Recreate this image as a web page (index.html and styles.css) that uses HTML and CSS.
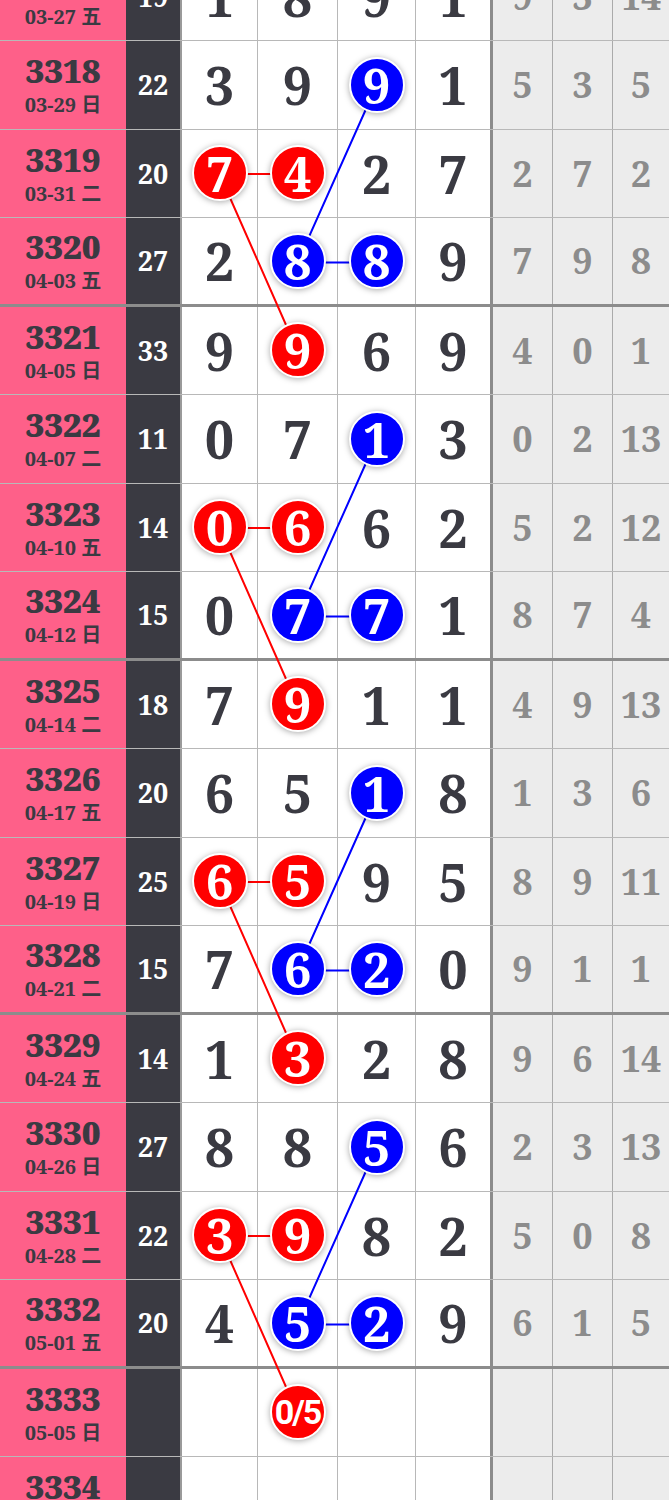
FILE: index.html
```html
<!DOCTYPE html>
<html lang="zh">
<head>
    <meta charset="UTF-8">
    <meta name="viewport" content="width=device-width, initial-scale=1.0">
    <title>走势图</title>
    <link rel="stylesheet" href="styles.css">
</head>
<body>

<div class="chart">
    <div class="row">
        <div class="issue"><b>3317</b><span>03-27 五</span></div>
        <div class="sum">19</div>
        <div class="cell">1</div><div class="cell">8</div><div class="cell">9</div><div class="cell last">1</div>
        <div class="miss">9</div><div class="miss">3</div><div class="miss">14</div>
    </div>
    <div class="row">
        <div class="issue"><b>3318</b><span>03-29 日</span></div>
        <div class="sum">22</div>
        <div class="cell">3</div><div class="cell">9</div><div class="cell"><i class="ball blue">9</i></div><div class="cell last">1</div>
        <div class="miss">5</div><div class="miss">3</div><div class="miss">5</div>
    </div>
    <div class="row">
        <div class="issue"><b>3319</b><span>03-31 二</span></div>
        <div class="sum">20</div>
        <div class="cell"><i class="ball red">7</i></div><div class="cell"><i class="ball red">4</i></div><div class="cell">2</div><div class="cell last">7</div>
        <div class="miss">2</div><div class="miss">7</div><div class="miss">2</div>
    </div>
    <div class="row sep">
        <div class="issue"><b>3320</b><span>04-03 五</span></div>
        <div class="sum">27</div>
        <div class="cell">2</div><div class="cell"><i class="ball blue">8</i></div><div class="cell"><i class="ball blue">8</i></div><div class="cell last">9</div>
        <div class="miss">7</div><div class="miss">9</div><div class="miss">8</div>
    </div>
    <div class="row">
        <div class="issue"><b>3321</b><span>04-05 日</span></div>
        <div class="sum">33</div>
        <div class="cell">9</div><div class="cell"><i class="ball red">9</i></div><div class="cell">6</div><div class="cell last">9</div>
        <div class="miss">4</div><div class="miss">0</div><div class="miss">1</div>
    </div>
    <div class="row">
        <div class="issue"><b>3322</b><span>04-07 二</span></div>
        <div class="sum">11</div>
        <div class="cell">0</div><div class="cell">7</div><div class="cell"><i class="ball blue">1</i></div><div class="cell last">3</div>
        <div class="miss">0</div><div class="miss">2</div><div class="miss">13</div>
    </div>
    <div class="row">
        <div class="issue"><b>3323</b><span>04-10 五</span></div>
        <div class="sum">14</div>
        <div class="cell"><i class="ball red">0</i></div><div class="cell"><i class="ball red">6</i></div><div class="cell">6</div><div class="cell last">2</div>
        <div class="miss">5</div><div class="miss">2</div><div class="miss">12</div>
    </div>
    <div class="row sep">
        <div class="issue"><b>3324</b><span>04-12 日</span></div>
        <div class="sum">15</div>
        <div class="cell">0</div><div class="cell"><i class="ball blue">7</i></div><div class="cell"><i class="ball blue">7</i></div><div class="cell last">1</div>
        <div class="miss">8</div><div class="miss">7</div><div class="miss">4</div>
    </div>
    <div class="row">
        <div class="issue"><b>3325</b><span>04-14 二</span></div>
        <div class="sum">18</div>
        <div class="cell">7</div><div class="cell"><i class="ball red">9</i></div><div class="cell">1</div><div class="cell last">1</div>
        <div class="miss">4</div><div class="miss">9</div><div class="miss">13</div>
    </div>
    <div class="row">
        <div class="issue"><b>3326</b><span>04-17 五</span></div>
        <div class="sum">20</div>
        <div class="cell">6</div><div class="cell">5</div><div class="cell"><i class="ball blue">1</i></div><div class="cell last">8</div>
        <div class="miss">1</div><div class="miss">3</div><div class="miss">6</div>
    </div>
    <div class="row">
        <div class="issue"><b>3327</b><span>04-19 日</span></div>
        <div class="sum">25</div>
        <div class="cell"><i class="ball red">6</i></div><div class="cell"><i class="ball red">5</i></div><div class="cell">9</div><div class="cell last">5</div>
        <div class="miss">8</div><div class="miss">9</div><div class="miss">11</div>
    </div>
    <div class="row sep">
        <div class="issue"><b>3328</b><span>04-21 二</span></div>
        <div class="sum">15</div>
        <div class="cell">7</div><div class="cell"><i class="ball blue">6</i></div><div class="cell"><i class="ball blue">2</i></div><div class="cell last">0</div>
        <div class="miss">9</div><div class="miss">1</div><div class="miss">1</div>
    </div>
    <div class="row">
        <div class="issue"><b>3329</b><span>04-24 五</span></div>
        <div class="sum">14</div>
        <div class="cell">1</div><div class="cell"><i class="ball red">3</i></div><div class="cell">2</div><div class="cell last">8</div>
        <div class="miss">9</div><div class="miss">6</div><div class="miss">14</div>
    </div>
    <div class="row">
        <div class="issue"><b>3330</b><span>04-26 日</span></div>
        <div class="sum">27</div>
        <div class="cell">8</div><div class="cell">8</div><div class="cell"><i class="ball blue">5</i></div><div class="cell last">6</div>
        <div class="miss">2</div><div class="miss">3</div><div class="miss">13</div>
    </div>
    <div class="row">
        <div class="issue"><b>3331</b><span>04-28 二</span></div>
        <div class="sum">22</div>
        <div class="cell"><i class="ball red">3</i></div><div class="cell"><i class="ball red">9</i></div><div class="cell">8</div><div class="cell last">2</div>
        <div class="miss">5</div><div class="miss">0</div><div class="miss">8</div>
    </div>
    <div class="row sep">
        <div class="issue"><b>3332</b><span>05-01 五</span></div>
        <div class="sum">20</div>
        <div class="cell">4</div><div class="cell"><i class="ball blue">5</i></div><div class="cell"><i class="ball blue">2</i></div><div class="cell last">9</div>
        <div class="miss">6</div><div class="miss">1</div><div class="miss">5</div>
    </div>
    <div class="row">
        <div class="issue"><b>3333</b><span>05-05 日</span></div>
        <div class="sum"></div>
        <div class="cell"></div><div class="cell"><i class="ball red small">0/5</i></div><div class="cell"></div><div class="cell last"></div>
        <div class="miss"></div><div class="miss"></div><div class="miss"></div>
    </div>
    <div class="row">
        <div class="issue"><b>3334</b><span>05-08 二</span></div>
        <div class="sum"></div>
        <div class="cell"></div><div class="cell"></div><div class="cell"></div><div class="cell last"></div>
        <div class="miss"></div><div class="miss"></div><div class="miss"></div>
    </div>

    <!-- 连线 -->
    <svg class="links" width="669" height="1593" viewBox="0 0 669 1593">
        <g stroke="#f00" stroke-width="2" fill="none">
            <polyline points="297.5,221 219.5,221 297.5,398"/>
            <polyline points="297.5,575 219.5,575 297.5,752"/>
            <polyline points="297.5,929 219.5,929 297.5,1106"/>
            <polyline points="297.5,1283 219.5,1283 297.5,1460"/>
        </g>
        <g stroke="#00f" stroke-width="2" fill="none">
            <polyline points="376.5,132.5 297.5,309.5 376.5,309.5"/>
            <polyline points="376.5,486.5 297.5,663.5 376.5,663.5"/>
            <polyline points="376.5,840.5 297.5,1017.5 376.5,1017.5"/>
            <polyline points="376.5,1194.5 297.5,1371.5 376.5,1371.5"/>
        </g>
    </svg>
</div>

</body>
</html>
```

FILE: styles.css
```css
body {
    margin: 0;
    background-color: #fff;
    font-family: "Noto Serif", "DejaVu Serif", "Noto Sans CJK SC", serif;
    overflow: hidden;
}
.chart {
    position: relative;
    width: 669px;
    margin-top: -47.5px;
}
.row {
    display: grid;
    grid-template-columns: 126px 56px 76px 80px 78px 77px 60px 60px 1fr;
    height: 88.5px;
    box-sizing: border-box;
    border-bottom: 1px solid rgba(0, 0, 0, 0.28);
}
.row.sep {
    border-bottom: 3px solid rgba(0, 0, 0, 0.45); /* 每4期一条粗线 */
}
.row > div {
    display: flex;
    align-items: center;
    justify-content: center;
    font-weight: bold;
}
.issue {
    flex-direction: column;
    background-color: #fe6089;
    color: #3a3a42;
}
.issue b {
    font-size: 33px;
    line-height: 36px;
}
.issue span {
    font-size: 20px;
    line-height: 22px;
    margin-top: 5px;
}
.sum {
    background-color: #3a3a42;
    color: #fff;
    font-size: 27px;
    border-right: 2px solid #9a9a9a;
}
.cell {
    color: #3a3a42;
    font-size: 52px;
    border-right: 1px solid rgba(0, 0, 0, 0.28);
}
.cell.last {
    border-right: 3px solid rgba(0, 0, 0, 0.45);
}
.miss {
    background-color: #ececec;
    color: #8c8c8c;
    font-size: 36px;
    border-right: 1px solid rgba(0, 0, 0, 0.28);
}
.miss:last-child {
    border-right: none;
}
.ball {
    position: relative;
    z-index: 1;
    width: 52px;
    height: 52px;
    border-radius: 50%;
    border: 2px solid #fff;
    box-shadow: 0 1px 6px rgba(0, 0, 0, 0.35);
    color: #fff;
    font-style: normal;
    font-size: 49px;
    line-height: 52px;
    text-align: center;
}
.ball.red {
    background-color: #f00;
}
.ball.blue {
    background-color: #00f;
}
.ball.small {
    font-family: Roboto, "Liberation Sans", sans-serif;
    font-size: 34px;
    letter-spacing: -2px;
}
.links {
    position: absolute;
    top: 0;
    left: 0;
    pointer-events: none;
}
```
